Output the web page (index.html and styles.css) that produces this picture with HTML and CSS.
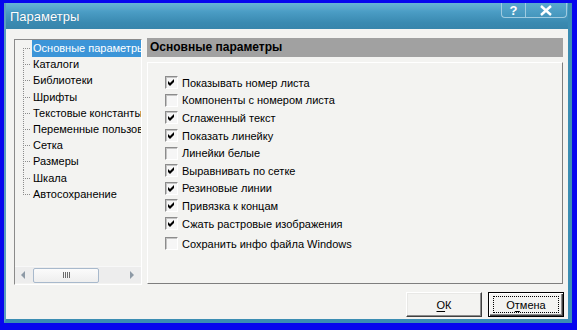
FILE: index.html
```html
<!DOCTYPE html>
<html lang="ru">
<head>
<meta charset="utf-8">
<title>Параметры</title>
<link rel="stylesheet" href="styles.css">
</head>
<body>
<div class="window">
  <div class="titlebar">
    <span class="title">Параметры</span>
    <div class="tbtns">
      <span class="tbtn help">?</span>
      <span class="tbtn close">
        <svg width="14" height="11" viewBox="0 0 14 11"><path d="M2 1 L12 10 M12 1 L2 10" stroke="#fff" stroke-width="2.4" fill="none"/></svg>
      </span>
    </div>
  </div>
  <div class="client">
    <div class="main">
      <div class="tree">
        <ul class="items">
          <li class="item first"><span class="label sel">Основные параметры</span></li>
          <li class="item"><span class="label">Каталоги</span></li>
          <li class="item"><span class="label">Библиотеки</span></li>
          <li class="item"><span class="label">Шрифты</span></li>
          <li class="item"><span class="label">Текстовые константы</span></li>
          <li class="item"><span class="label">Переменные пользователя</span></li>
          <li class="item"><span class="label">Сетка</span></li>
          <li class="item"><span class="label">Размеры</span></li>
          <li class="item"><span class="label">Шкала</span></li>
          <li class="item last"><span class="label">Автосохранение</span></li>
        </ul>
        <div class="hscroll">
          <span class="arrow left"></span>
          <span class="thumb"><span class="grip"></span></span>
          <span class="arrow right"></span>
        </div>
      </div>
      <div class="panel">
        <div class="phead">Основные параметры</div>
        <div class="frame">
          <label class="row"><span class="cb on"><svg width="11" height="11" viewBox="0 0 11 11"><polygon points="2,4 4,6 8,2 8,5 4,9 2,7" fill="#000"/></svg></span>Показывать номер листа</label>
          <label class="row"><span class="cb"></span>Компоненты с номером листа</label>
          <label class="row"><span class="cb on"><svg width="11" height="11" viewBox="0 0 11 11"><polygon points="2,4 4,6 8,2 8,5 4,9 2,7" fill="#000"/></svg></span>Сглаженный текст</label>
          <label class="row"><span class="cb on"><svg width="11" height="11" viewBox="0 0 11 11"><polygon points="2,4 4,6 8,2 8,5 4,9 2,7" fill="#000"/></svg></span>Показать линейку</label>
          <label class="row"><span class="cb"></span>Линейки белые</label>
          <label class="row"><span class="cb on"><svg width="11" height="11" viewBox="0 0 11 11"><polygon points="2,4 4,6 8,2 8,5 4,9 2,7" fill="#000"/></svg></span>Выравнивать по сетке</label>
          <label class="row"><span class="cb on"><svg width="11" height="11" viewBox="0 0 11 11"><polygon points="2,4 4,6 8,2 8,5 4,9 2,7" fill="#000"/></svg></span>Резиновые линии</label>
          <label class="row"><span class="cb on"><svg width="11" height="11" viewBox="0 0 11 11"><polygon points="2,4 4,6 8,2 8,5 4,9 2,7" fill="#000"/></svg></span>Привязка к концам</label>
          <label class="row"><span class="cb on"><svg width="11" height="11" viewBox="0 0 11 11"><polygon points="2,4 4,6 8,2 8,5 4,9 2,7" fill="#000"/></svg></span>Сжать растровые изображения</label>
          <label class="row lastrow"><span class="cb"></span>Сохранить инфо файла Windows</label>
        </div>
      </div>
    </div>
    <div class="buttons">
      <button class="btn"><u>О</u>К</button>
      <button class="btn default"><span class="focus">О<u>т</u>мена</span></button>
    </div>
  </div>
</div>
</body>
</html>
```

FILE: styles.css
```css
* { box-sizing: border-box; }
html, body {
  margin: 0;
  padding: 0;
}
body {
  width: 577px;
  height: 330px;
  background: #0606ee;
  font-family: "Liberation Sans", Arial, sans-serif;
  font-size: 11px;
  color: #000;
  overflow: hidden;
}
.window {
  margin: 3px 5px 0 4px;
  width: 568px;
  height: 320px;
  border-left: 2px solid #5b9fbf;
  border-right: 4px solid #3b8db3;
  border-bottom: 4px solid #3b8db3;
  display: flex;
  flex-direction: column;
  background: #f3f3f1;
}
.titlebar {
  height: 26px;
  flex: none;
  display: flex;
  align-items: flex-start;
  background: linear-gradient(to bottom, #67b3d6 0%, #4a9cc4 35%, #3a8ab1 75%, #3785ab 100%);
}
.title {
  align-self: center;
  padding-left: 4px;
  color: #fff;
  font-size: 13px;
  text-shadow: 0 0 1px rgba(0,40,80,0.4);
}
.tbtns {
  margin-left: auto;
  margin-right: 1px;
  display: flex;
}
.tbtn {
  height: 15px;
  display: flex;
  align-items: center;
  justify-content: center;
  color: #fff;
  font-weight: bold;
  font-size: 13px;
  border: 1px solid #9fcbe0;
  border-top: none;
  background: linear-gradient(to bottom, #5aa9cf, #4596bd);
}
.help {
  width: 24px;
  border-radius: 0 0 0 4px;
  border-right: none;
}
.close {
  width: 42px;
  border-radius: 0 0 4px 0;
}
.client {
  flex: 1;
  display: flex;
  flex-direction: column;
  padding: 9px 4px 0 8px;
}
.main {
  display: flex;
  gap: 5px;
  height: 247px;
}
.tree {
  margin-top: 1px;
  width: 128px;
  height: 246px;
  border: 1px solid;
  border-color: #8a8a8a #ffffff #ffffff #8a8a8a;
  display: flex;
  flex-direction: column;
  overflow: hidden;
}
.items {
  list-style: none;
  margin: 0;
  padding: 0;
  flex: 1;
}
.item {
  height: 16.2px;
  line-height: 16px;
  padding-left: 17px;
  white-space: nowrap;
  background-image:
    repeating-linear-gradient(to bottom, #8c8c8c 0 1px, transparent 1px 2px),
    repeating-linear-gradient(to right, #8c8c8c 0 1px, transparent 1px 2px);
  background-size: 1px 100%, 8px 1px;
  background-position: 8px 0, 8px 8px;
  background-repeat: no-repeat;
}
.item.first {
  background-size: 1px 50%, 8px 1px;
  background-position: 8px 100%, 8px 8px;
}
.item.last {
  background-size: 1px 8px, 8px 1px;
  background-position: 8px 0, 8px 8px;
}
.label {
  display: inline-block;
  padding: 0 1px;
  height: 17px;
  line-height: 17px;
}
.label.sel {
  background: #3c95d8;
  color: #fff;
}
.hscroll {
  height: 17px;
  margin-bottom: 1px;
  flex: none;
  display: flex;
  align-items: center;
  background: #ededed;
  border-top: 1px solid #f8f8f8;
}
.arrow {
  width: 0;
  height: 0;
  border-top: 4px solid transparent;
  border-bottom: 4px solid transparent;
}
.arrow.left {
  margin-left: 6px;
  border-right: 4px solid #8e9aa6;
}
.arrow.right {
  margin-left: auto;
  margin-right: 7px;
  border-left: 4px solid #8e9aa6;
}
.thumb {
  margin-left: 8px;
  width: 66px;
  height: 15px;
  border: 1px solid #a8b9cc;
  border-radius: 2px;
  background: linear-gradient(to bottom, #fbfbfb, #eeeeee);
  display: flex;
  align-items: center;
  justify-content: center;
}
.grip {
  width: 7px;
  height: 6px;
  background: repeating-linear-gradient(to right, #6c6c6c 0 1px, transparent 1px 2px);
}
.panel {
  width: 416px;
  display: flex;
  flex-direction: column;
}
.phead {
  height: 19px;
  flex: none;
  background: #a1a1a1;
  font-weight: bold;
  font-size: 12px;
  line-height: 19px;
  padding-left: 3px;
}
.frame {
  margin-top: 5px;
  height: 222px;
  border: 1px solid;
  border-color: #ffffff #7e7e7e #7e7e7e #ffffff;
  padding: 11px 0 0 17px;
  display: flex;
  flex-direction: column;
}
.row {
  height: 17.6px;
  display: flex;
  align-items: center;
  gap: 4px;
  white-space: nowrap;
}
.row.lastrow {
  margin-top: 2.5px;
}
.cb {
  width: 13px;
  height: 13px;
  flex: none;
  background: #f6f6f6;
  border: 1px solid;
  border-color: #8c8c8c #ffffff #ffffff #8c8c8c;
  box-shadow: inset 1px 1px 0 #c4c4c4;
  display: flex;
  align-items: center;
  justify-content: center;
}
.cb svg {
  display: block;
}
.buttons {
  margin-top: 7px;
  display: flex;
  justify-content: flex-end;
  gap: 6px;
}
.btn {
  width: 76px;
  height: 25px;
  font-family: "Liberation Sans", Arial, sans-serif;
  font-size: 11px;
  color: #000;
  background: #f3f3f1;
  border: 1px solid;
  border-color: #ffffff #404040 #404040 #ffffff;
  box-shadow: inset -1px -1px 0 #8c8c8c, inset 1px 1px 0 #e8e8e6;
  padding: 0;
  display: flex;
  align-items: center;
  justify-content: center;
}
.btn u {
  text-decoration-thickness: 1px;
  text-underline-offset: 2px;
}
.btn.default {
  border: 1px solid #000;
  box-shadow: inset 1px 1px 0 #ffffff, inset -1px -1px 0 #404040, inset -2px -2px 0 #8c8c8c;
}
.focus {
  width: 66px;
  height: 17px;
  border: 1px dotted #000;
  display: flex;
  align-items: center;
  justify-content: center;
}
```
